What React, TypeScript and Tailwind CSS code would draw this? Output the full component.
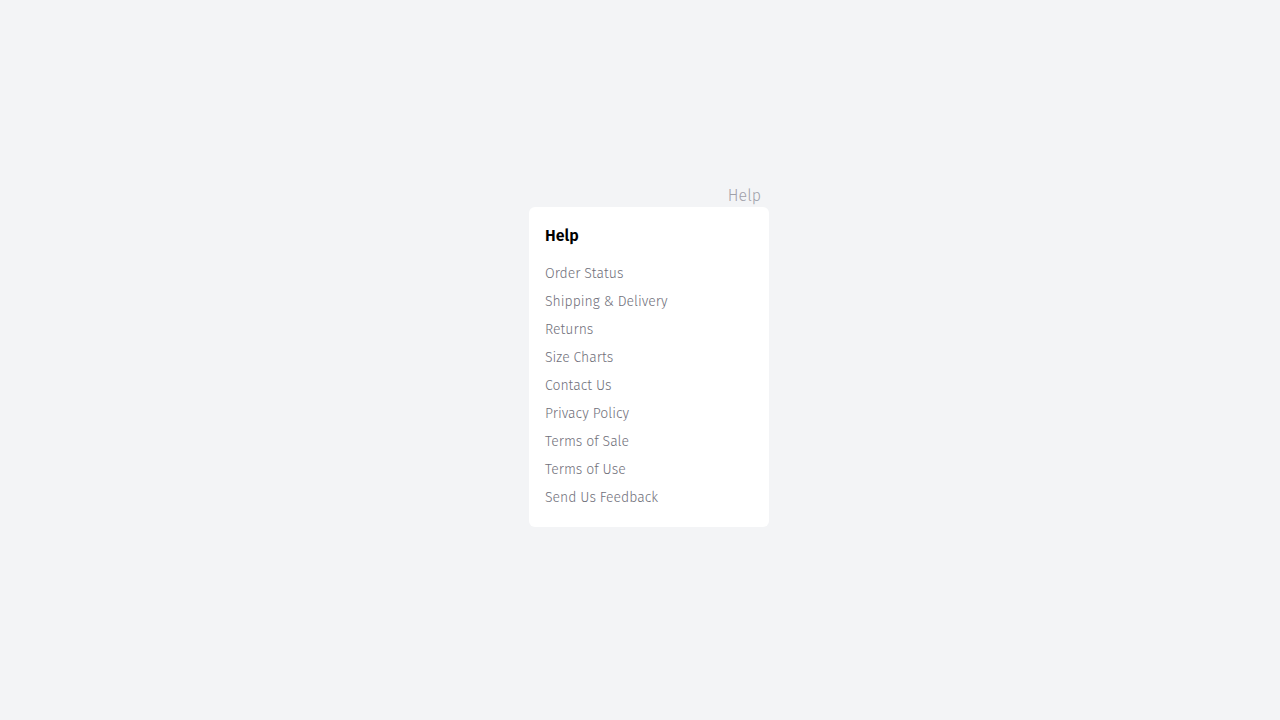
const LINKS = [
  'Order Status',
  'Shipping & Delivery',
  'Returns',
  'Size Charts',
  'Contact Us',
  'Privacy Policy',
  'Terms of Sale',
  'Terms of Use',
  'Send Us Feedback',
]

export default function App() {
  return (
    <div className="min-h-screen w-full bg-gray-100 pt-[184px] pl-[529px] font-['Fira_Sans',sans-serif] font-light">
      <div className="flex w-[240px] flex-col items-end">
        {/* trigger */}
        <button className="h-[23px] px-2 text-base leading-6 font-light text-zinc-400">Help</button>

        {/* dropdown */}
        <div className="w-full rounded-md bg-white px-4 pt-[17px] pb-[15px]">
          <p className="text-base font-semibold leading-6 text-black">Help</p>
          <ul className="mt-3 flex flex-col">
            {LINKS.map(l => (
              <li key={l}>
                <a href="#" className="block py-1 text-sm leading-5 text-zinc-500">
                  {l}
                </a>
              </li>
            ))}
          </ul>
        </div>
      </div>
    </div>
  )
}
